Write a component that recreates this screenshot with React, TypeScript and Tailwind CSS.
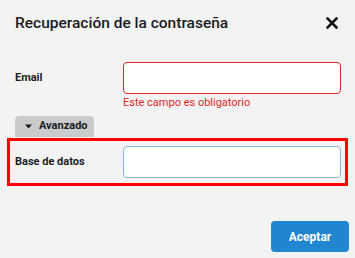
import React from "react";

const FONT = { fontFamily: "Roboto, 'Liberation Sans', sans-serif" };

function CloseIcon() {
  return (
    <svg width="12" height="12" viewBox="0 0 12 12" className="block">
      <path d="M1.5 1.5 L10.5 10.5 M10.5 1.5 L1.5 10.5" stroke="#111" strokeWidth="2.6" strokeLinecap="square" />
    </svg>
  );
}

function Caret() {
  return (
    <svg width="7" height="5" viewBox="0 0 7 5" className="block">
      <polygon points="0,0.5 7,0.5 3.5,4.5" fill="#1b1c1d" />
    </svg>
  );
}

export default function App() {
  return (
    <div className="w-[355px] h-[258px] bg-[#f3f3f3] text-[#1b1c1d] overflow-hidden" style={FONT}>
      {/* header */}
      <div className="flex items-center justify-between pl-[15px] pr-[17px] pt-[13px]">
        <h2 className="text-[15.5px] leading-[20px] font-medium">Recuperación de la contraseña</h2>
        <button className="p-0 -mt-[1px]">
          <CloseIcon />
        </button>
      </div>

      {/* form */}
      <div className="pl-[15px] pr-[14px] mt-[29px]">
        <div className="flex items-start">
          <label className="w-[108px] h-[32px] flex items-center text-[11px] font-bold">Email</label>
          <div className="w-[218px]">
            <input
              type="text"
              className="block w-full h-[32px] bg-white border border-[#db2828] rounded-[4px] px-2 text-[12px] outline-none"
            />
            <div className="mt-[2px] text-[11px] leading-[14px] text-[#db2828]">Este campo es obligatorio</div>
          </div>
        </div>

        <button className="mt-[6px] flex items-center gap-[7px] h-[21px] pl-[10px] pr-[6px] bg-[#cacbcd] rounded-t-[4px] text-[11px] font-bold">
          <Caret />
          Avanzado
        </button>

        <div className="mt-[1px] -ml-[8px] -mr-[7px] border-[3px] border-[#ff0000] pl-[5px] pr-[4px] py-[5px]">
          <div className="flex items-center">
            <label className="w-[108px] text-[11px] font-bold">Base de datos</label>
            <input
              type="text"
              className="block w-[218px] h-[32px] bg-white border border-[#85b7d9] rounded-[4px] px-2 text-[12px] outline-none"
            />
          </div>
        </div>
      </div>

      {/* footer */}
      <div className="flex justify-end pr-[6px] mt-[35px]">
        <button className="w-[78px] h-[31px] bg-[#2185d0] text-white text-[12px] font-bold rounded-[4px]">
          Aceptar
        </button>
      </div>
    </div>
  );
}
